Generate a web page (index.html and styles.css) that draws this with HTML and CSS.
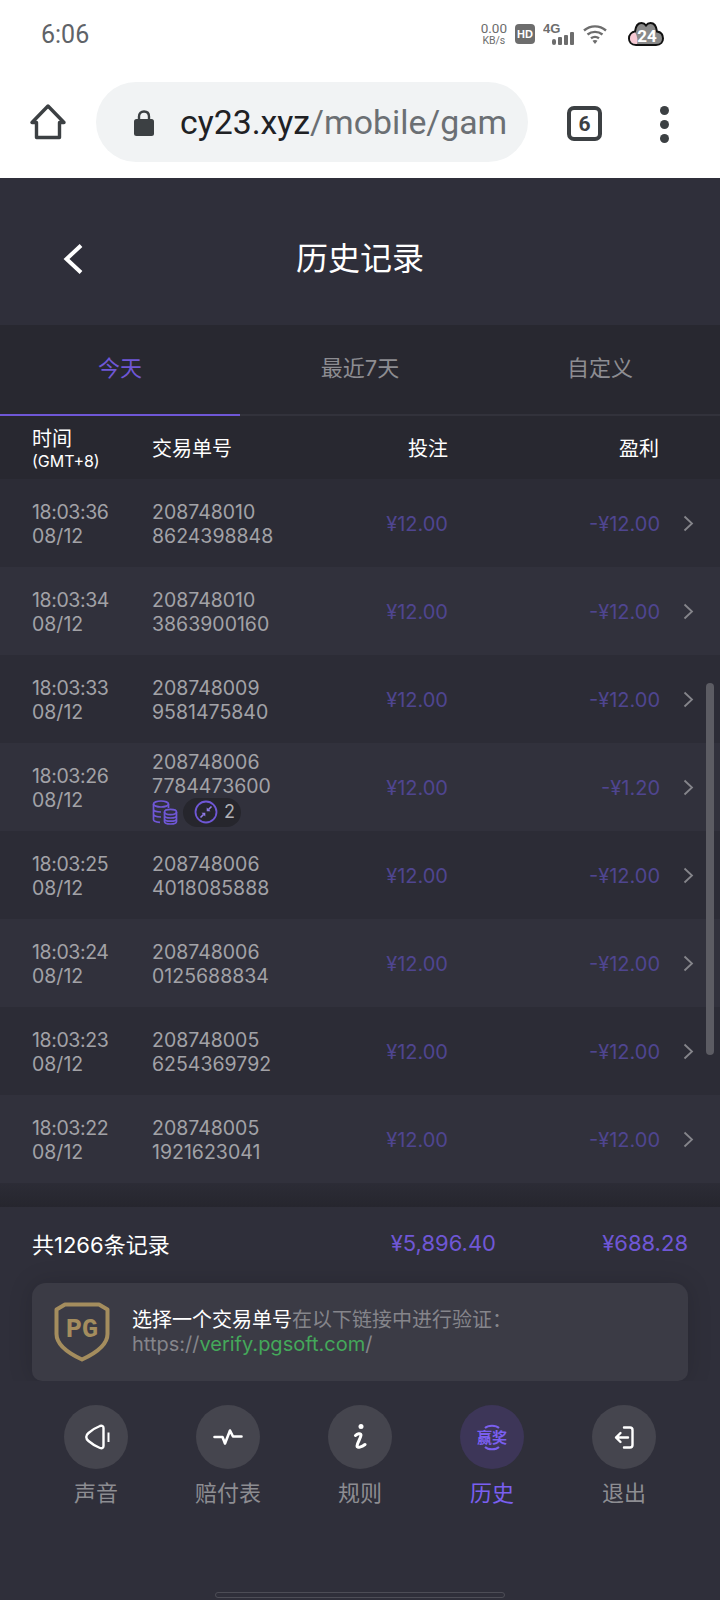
FILE: index.html
```html
<!DOCTYPE html>
<html lang="zh-CN">
<head>
    <meta charset="UTF-8">
    <meta name="viewport" content="width=device-width, initial-scale=1.0">
    <title>历史记录</title>
    <link rel="stylesheet" href="styles.css">
</head>
<body>
    <svg class="defs" width="0" height="0">
        <symbol id="chev" viewBox="0 0 11 17"><path d="M1.500 1.500 9 8.500 1.500 15.500" fill="none" stroke="currentColor" stroke-width="1.800"/></symbol>
    </svg>

    <!-- Barra de estado -->
    <div class="status">
        <span class="clock">6:06</span>
        <div class="status-icons">
            <span class="speed">0.00<br><small>KB/s</small></span>
            <span class="hd">HD</span>
            <svg class="signal" width="32" height="24" viewBox="0 0 32 24">
                <text x="0" y="11" class="signal-text">4G</text>
                <rect x="9" y="17" width="4" height="6" rx="2" fill="#6d6d6d"/>
                <rect x="15" y="15" width="4" height="8" rx="1" fill="#6d6d6d"/>
                <rect x="21" y="13" width="4" height="10" rx="1" fill="#6d6d6d"/>
                <rect x="27" y="10" width="4" height="13" rx="1" fill="#6d6d6d"/>
            </svg>
            <svg class="wifi" width="24" height="20" viewBox="0 0 24 20">
                <path d="M1 6.500C7.500 1 16.500 1 23 6.500M4.500 10.500C9 7 15 7 19.500 10.500M8 14.300C10.500 12.500 13.500 12.500 16 14.300" fill="none" stroke="#6d6d6d" stroke-width="2.400"/>
                <path d="M12 20 9.500 16.800C11 15.800 13 15.800 14.500 16.800Z" fill="#6d6d6d"/>
            </svg>
            <div class="cloud">
                <svg width="36" height="26" viewBox="0 0 36 26">
                    <path d="M8 24C3 24 1 20.500 1 17.500 1 13.500 4 11 7 10.500 7.500 6.500 9.500 2 13.500 2 15.500 2 17 3 18 4.500 19 3 20.500 2 22.500 2 26.500 2 28.500 6.500 29 10.500 32.500 11 35 13.500 35 17.500 35 20.500 33 24 28 24Z" fill="#8a8a8a" stroke="#111" stroke-width="2"/>
                    <path d="M8 23C4 23 2 20 2 17.500 2 14.500 4 12 7 11.500 9 14 10 19 9 23Z" fill="#f6c9d4"/>
                </svg>
                <span class="cloud-num">24</span>
            </div>
        </div>
    </div>

    <!-- Barra del navegador -->
    <div class="browser">
        <svg class="home" width="38" height="38" viewBox="0 0 38 38">
            <path d="M19 3 3 19.500H7.500V34.500H30.500V19.500H35Z" fill="none" stroke="#3c4043" stroke-width="3.400" stroke-linejoin="round"/>
        </svg>
        <div class="url">
            <svg width="20" height="27" viewBox="0 0 20 27">
                <path d="M5 11V7.500C5 4.500 7 2.500 10 2.500S15 4.500 15 7.500V11" fill="none" stroke="#3c4043" stroke-width="2.400"/>
                <rect x="0" y="10" width="20" height="17" rx="2.500" fill="#3c4043"/>
            </svg>
            <span class="url-text"><b>cy23.xyz</b>/mobile/gam</span>
        </div>
        <span class="tabs-count">6</span>
        <div class="dots"><i></i><i></i><i></i></div>
    </div>

    <!-- Cabecera -->
    <div class="header">
        <svg class="back" width="22" height="32" viewBox="0 0 22 32"><path d="M19 2.500 4.500 16 19 29.500" fill="none" stroke="#fff" stroke-width="4"/></svg>
        <h1>历史记录</h1>
    </div>

    <div class="tabs">
        <div class="tab active">今天</div>
        <div class="tab">最近7天</div>
        <div class="tab">自定义</div>
    </div>

    <div class="table-head">
        <div class="th-time">时间<small>(GMT+8)</small></div>
        <div>交易单号</div>
        <div class="right">投注</div>
        <div class="right">盈利</div>
    </div>

    <!-- Lista de registros -->
    <div class="list">
        <div class="scrollbar"></div>
        <div class="row">
            <div class="time"><span>18:03:36</span><br>08/12</div>
            <div>208748010<br>8624398848</div>
            <div class="money">¥12.00</div>
            <div class="money">-¥12.00</div>
            <svg class="chev"><use href="#chev"/></svg>
        </div>
        <div class="row alt">
            <div class="time"><span>18:03:34</span><br>08/12</div>
            <div>208748010<br>3863900160</div>
            <div class="money">¥12.00</div>
            <div class="money">-¥12.00</div>
            <svg class="chev"><use href="#chev"/></svg>
        </div>
        <div class="row">
            <div class="time"><span>18:03:33</span><br>08/12</div>
            <div>208748009<br>9581475840</div>
            <div class="money">¥12.00</div>
            <div class="money">-¥12.00</div>
            <svg class="chev"><use href="#chev"/></svg>
        </div>
        <div class="row alt">
            <div class="time"><span>18:03:26</span><br>08/12</div>
            <div>
                208748006<br>7784473600
                <div class="tags">
                    <svg width="26" height="25" viewBox="0 0 26 25" fill="none" stroke="#6f57d6" stroke-width="1.700">
                        <ellipse cx="9" cy="4" rx="7.500" ry="3"/>
                        <path d="M1.500 4V19.500C1.500 21 4 22 8 22.300M1.500 9C1.500 10.700 4.500 12 9 12M1.500 14C1.500 15.500 4 16.800 9 17M16.500 4V8"/>
                        <ellipse cx="18.500" cy="12" rx="6" ry="2.600"/>
                        <path d="M12.500 12V21.500C12.500 23 15 24 18.500 24S24.500 23 24.500 21.500V12M12.500 15.500C12.500 17 15 18 18.500 18S24.500 17 24.500 15.500M12.500 18.700C12.500 20.200 15 21.200 18.500 21.200S24.500 20.200 24.500 18.700"/>
                    </svg>
                    <span class="tag-pill">
                        <svg width="24" height="24" viewBox="0 0 24 24">
                            <circle cx="12" cy="12" r="10.500" fill="none" stroke="#6f57d6" stroke-width="1.800"/>
                            <path d="M17.500 6.500 14.500 9.500M6.500 17.500 9.500 14.500" stroke="#8f7be8" stroke-width="1.600"/>
                            <path d="M12.700 7.500 16.500 11.300 12.700 11.300ZM11.300 16.500 7.500 12.700 11.300 12.700Z" fill="#8f7be8"/>
                        </svg>
                        2
                    </span>
                </div>
            </div>
            <div class="money">¥12.00</div>
            <div class="money">-¥1.20</div>
            <svg class="chev"><use href="#chev"/></svg>
        </div>
        <div class="row">
            <div class="time"><span>18:03:25</span><br>08/12</div>
            <div>208748006<br>4018085888</div>
            <div class="money">¥12.00</div>
            <div class="money">-¥12.00</div>
            <svg class="chev"><use href="#chev"/></svg>
        </div>
        <div class="row alt">
            <div class="time"><span>18:03:24</span><br>08/12</div>
            <div>208748006<br>0125688834</div>
            <div class="money">¥12.00</div>
            <div class="money">-¥12.00</div>
            <svg class="chev"><use href="#chev"/></svg>
        </div>
        <div class="row">
            <div class="time"><span>18:03:23</span><br>08/12</div>
            <div>208748005<br>6254369792</div>
            <div class="money">¥12.00</div>
            <div class="money">-¥12.00</div>
            <svg class="chev"><use href="#chev"/></svg>
        </div>
        <div class="row alt">
            <div class="time"><span>18:03:22</span><br>08/12</div>
            <div>208748005<br>1921623041</div>
            <div class="money">¥12.00</div>
            <div class="money">-¥12.00</div>
            <svg class="chev"><use href="#chev"/></svg>
        </div>
    </div>

    <!-- Totales -->
    <div class="summary">
        <div class="totals">
            <span class="total-label">共1266条记录</span>
            <span class="total-bet">¥5,896.40</span>
            <span class="total-win">¥688.28</span>
        </div>
        <div class="verify">
            <div class="pg">
                <svg width="56" height="60" viewBox="0 0 56 60">
                    <path d="M11 2.500H45L53.500 7.500V32C53.500 44 40 52 28 57.500 16 52 2.500 44 2.500 32V7.500Z" fill="none" stroke="#a48d5e" stroke-width="4" stroke-linejoin="round"/>
                </svg>
                <span class="pg-text">PG</span>
            </div>
            <div class="verify-text">
                <b>选择一个交易单号</b>在以下链接中进行验证：<br>
                https://<span class="link">verify.pgsoft.com</span>/
            </div>
        </div>
    </div>

    <!-- Menú inferior -->
    <div class="nav">
        <div class="nav-item">
            <div class="circle">
                <svg class="speaker" width="25" height="26" viewBox="0 0 25 26" fill="none" stroke="#fff" stroke-width="2.400" stroke-linejoin="round">
                    <path d="M15 2C11 3.500 7 6 3.500 9 0.500 11.500 0.500 14.500 3.500 17 7 20 11 22.500 15 24 17 24.700 18.500 24 18.500 22V4C18.500 2 17 1.300 15 2Z"/>
                    <path d="M23.500 8.500V18" stroke-width="2"/>
                </svg>
            </div>
            <span>声音</span>
        </div>
        <div class="nav-item">
            <div class="circle">
                <svg width="30" height="18" viewBox="0 0 30 18" fill="none" stroke="#fff" stroke-width="2.600" stroke-linejoin="round" stroke-linecap="round">
                    <path d="M1.500 9H9.500L12 15.500 17 2.500 20 8.500H28.500"/>
                </svg>
            </div>
            <span>赔付表</span>
        </div>
        <div class="nav-item">
            <div class="circle">
                <svg width="14" height="26" viewBox="0 0 14 26" fill="none" stroke="#fff" stroke-width="3" stroke-linecap="round">
                    <circle cx="8" cy="2.500" r="2.500" fill="#fff" stroke="none"/>
                    <path d="M2.500 11.500C4 10 7.500 8.500 8 11 8 14 4 19 4 22 4 24.500 9 23 12 20.500"/>
                </svg>
            </div>
            <span>规则</span>
        </div>
        <div class="nav-item current">
            <div class="circle">
                <svg class="arc" width="16" height="5" viewBox="0 0 16 5"><path d="M1 4C4 1 12 1 15 4" fill="none" stroke="#7a5ff0" stroke-width="2"/></svg>
                <span class="win-mark">赢奖</span>
                <svg class="arc" width="16" height="5" viewBox="0 0 16 5"><path d="M1 1C4 4 12 4 15 1" fill="none" stroke="#7a5ff0" stroke-width="2"/></svg>
            </div>
            <span>历史</span>
        </div>
        <div class="nav-item">
            <div class="circle">
                <svg width="20" height="23" viewBox="0 0 20 23" fill="none" stroke="#fff" stroke-width="2.400" stroke-linecap="round" stroke-linejoin="round">
                    <path d="M10 1.500H16C17.500 1.500 18.500 2.500 18.500 4V19C18.500 20.500 17.500 21.500 16 21.500H10"/>
                    <path d="M14 11.500H2M6.500 7 2 11.500 6.500 16"/>
                </svg>
            </div>
            <span>退出</span>
        </div>
        <div class="home-bar"></div>
    </div>
</body>
</html>
```

FILE: styles.css
```css
* {
    box-sizing: border-box;
}
body {
    margin: 0;
    width: 720px;
    height: 1600px;
    overflow: hidden;
    font-family: Inter, "Noto Sans CJK SC", sans-serif;
    background-color: #2f2f3a;
    color: #a2a2a7;
}
.defs {
    position: absolute;
}

/* status bar */
.status {
    height: 72px;
    background-color: #ffffff;
    display: flex;
    align-items: center;
    justify-content: space-between;
    padding: 0 56px 4px 41px;
}
.clock {
    font-family: Roboto, sans-serif;
    font-size: 25px;
    color: #5f6368;
}
.status-icons {
    display: flex;
    align-items: center;
    gap: 8px;
}
.speed {
    font-family: Roboto, sans-serif;
    font-size: 13.500px;
    line-height: 11px;
    color: #6d6d6d;
    text-align: center;
}
.speed small {
    font-size: 10.500px;
}
.hd {
    width: 20px;
    height: 20px;
    border-radius: 4px;
    background-color: #6d6d6d;
    color: #ffffff;
    font-family: "Liberation Sans", sans-serif;
    font-weight: bold;
    font-size: 11px;
    display: flex;
    align-items: center;
    justify-content: center;
}
.signal-text {
    font-family: "Liberation Sans", sans-serif;
    font-weight: bold;
    font-size: 13px;
    fill: #6d6d6d;
}
.wifi {
    margin: 0 13px 0 0;
}
.cloud {
    position: relative;
    width: 36px;
    height: 26px;
}
.cloud-num {
    position: absolute;
    left: 6px;
    top: 5px;
    width: 26px;
    text-align: center;
    color: #ffffff;
    font-family: Roboto, sans-serif;
    font-weight: 700;
    font-size: 17px;
    line-height: 20px;
}

/* browser bar */
.browser {
    height: 106px;
    background-color: #ffffff;
    display: flex;
    align-items: flex-start;
    padding: 10px 0 0 29px;
}
.home {
    margin-top: 21px;
}
.url {
    margin-left: 29px;
    width: 432px;
    height: 80px;
    border-radius: 40px;
    background-color: #f1f3f4;
    display: flex;
    align-items: center;
    padding-left: 38px;
    gap: 26px;
}
.url-text {
    font-family: Roboto, sans-serif;
    font-size: 33.800px;
    color: #6b6f73;
    white-space: nowrap;
}
.url-text b {
    font-weight: 400;
    color: #202124;
}
.tabs-count {
    margin: 24px 0 0 39px;
    width: 35px;
    height: 35px;
    border: 4px solid #3c4043;
    border-radius: 7px;
    font-family: Roboto, sans-serif;
    font-weight: 700;
    font-size: 21px;
    color: #3c4043;
    display: flex;
    align-items: center;
    justify-content: center;
}
.dots {
    margin: 24px 0 0 58px;
    display: flex;
    flex-direction: column;
    gap: 5px;
}
.dots i {
    width: 9px;
    height: 9px;
    border-radius: 50%;
    background-color: #3c4043;
}

/* header and tabs */
.header {
    height: 147px;
    position: relative;
    display: flex;
    align-items: center;
    justify-content: center;
    padding-top: 8px;
    background-color: #2f2f3a;
}
.back {
    position: absolute;
    left: 62px;
    top: 65px;
}
h1 {
    margin: 0;
    font-size: 32px;
    font-weight: 400;
    color: #ffffff;
}
.tabs {
    height: 91px;
    display: flex;
    background-color: #282830;
    border-bottom: 2px solid #32323b;
    position: relative;
}
.tab {
    flex: 1;
    text-align: center;
    font-size: 22px;
    line-height: 86px;
    color: #8d8d92;
}
.tab.active {
    color: #6f57d6;
    position: relative;
}
.tab.active::after {
    content: "";
    position: absolute;
    left: 0;
    right: 0;
    bottom: -2px;
    height: 2px;
    background-color: #6f57d6;
}
.table-head {
    height: 63px;
    background-color: #282830;
    display: grid;
    grid-template-columns: 120px 176px 120px 211px;
    align-items: center;
    padding-left: 32px;
    font-size: 20px;
    color: #ffffff;
}
.th-time {
    line-height: 24px;
    padding-top: 3px;
}
.th-time small {
    display: block;
    font-size: 16px;
    line-height: 20px;
}
.right {
    text-align: right;
}

/* rows */
.list {
    height: 728px;
    position: relative;
    overflow: hidden;
    background-color: #2c2c36;
}
.list::after {
    content: "";
    position: absolute;
    left: 0;
    right: 0;
    bottom: 0;
    height: 24px;
    background: linear-gradient(#2c2c36, #26262e);
}
.row {
    height: 88px;
    display: grid;
    grid-template-columns: 120px 176px 120px 212px 1fr;
    align-items: center;
    padding: 2px 0 0 32px;
    font-size: 19.500px;
    line-height: 24px;
    background-color: #2c2c36;
}
.row.alt {
    background-color: #31313c;
}
.time span {
    letter-spacing: -0.400px;
}
.money {
    text-align: right;
    font-size: 20px;
    color: #4f4590;
}
.chev {
    width: 11px;
    height: 17px;
    margin: -2px 0 0 23px;
    color: #85858b;
}
.tags {
    display: flex;
    align-items: center;
    height: 28px;
    gap: 5px;
}
.tag-pill {
    display: flex;
    align-items: center;
    gap: 6px;
    width: 58px;
    height: 29px;
    padding-left: 11px;
    border-radius: 15px;
    background-color: #26262d;
    font-size: 18px;
    color: #b0b0b4;
}
.scrollbar {
    position: absolute;
    z-index: 1;
    left: 706px;
    top: 204px;
    width: 8px;
    height: 372px;
    border-radius: 4px;
    background-color: #5c5c63;
}

/* footer */
.summary {
    height: 174px;
    padding: 0 32px;
    background-color: #2f2f3a;
    position: relative;
    overflow: hidden;
}
.totals {
    height: 71px;
    margin-bottom: 5px;
    display: grid;
    grid-template-columns: 1fr 120px 188px;
    align-items: center;
    font-size: 22px;
    color: #6f57d6;
}
.total-label {
    color: #ffffff;
}
.total-bet {
    margin-right: 4px;
    white-space: nowrap;
    justify-self: end;
}
.total-win {
    text-align: right;
}
.verify {
    height: 98px;
    border-radius: 14px 14px 10px 10px;
    background-color: #3b3b45;
    box-shadow: 0 0 24px rgba(0,0,0,0.15);
    display: flex;
    align-items: center;
    padding: 0 0 0 22px;
    gap: 22px;
}
.pg {
    position: relative;
    width: 56px;
    height: 60px;
}
.pg-text {
    position: absolute;
    left: 0;
    right: 0;
    top: 14px;
    text-align: center;
    font-family: "Liberation Mono", monospace;
    font-weight: bold;
    font-size: 27px;
    line-height: 28px;
    color: #a48d5e;
}
.verify-text {
    font-size: 20px;
    line-height: 24px;
    color: #85858b;
}
.verify-text b {
    font-weight: 400;
    color: #ffffff;
}
.link {
    color: #44a85a;
}

/* bottom menu */
.nav {
    height: 219px;
    position: relative;
    display: flex;
    padding: 24px 0 0 30px;
    background-color: #2f2f3a;
}
.nav-item {
    width: 132px;
    display: flex;
    flex-direction: column;
    align-items: center;
    gap: 10px;
    font-size: 22px;
    line-height: 28px;
    color: #8d8d92;
}
.circle {
    width: 64px;
    height: 64px;
    border-radius: 50%;
    background-color: #45454e;
    display: flex;
    flex-direction: column;
    align-items: center;
    justify-content: center;
}
.speaker {
    margin-left: 3px;
}
.current {
    color: #7a5ff0;
}
.current .circle {
    background-color: #3d3658;
    gap: 1px;
}
.win-mark {
    font-size: 15px;
    line-height: 15px;
    font-weight: 700;
    color: #7a5ff0;
}
.home-bar {
    position: absolute;
    left: 215px;
    bottom: 2px;
    width: 290px;
    height: 6px;
    border: 1px solid #4d4d56;
    border-radius: 3px;
}
```
